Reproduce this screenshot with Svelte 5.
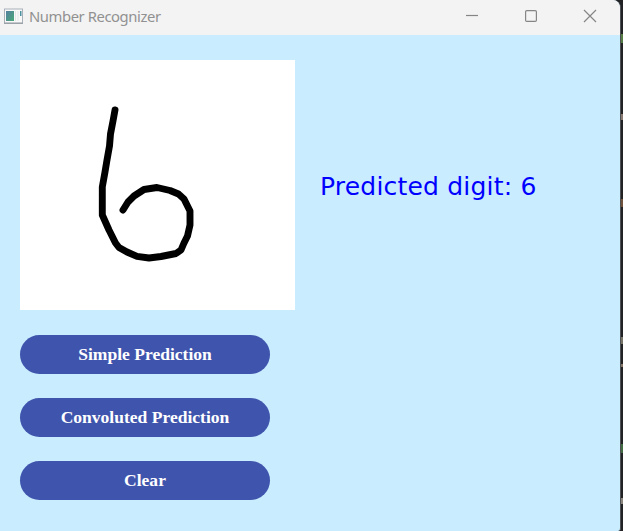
<script>
  const strokePoints =
    '115,110 113,121 110.5,134 109.5,146 107,160 105,172 102.3,187 102.3,215 109,230 115.5,243 119,247.5 127,252 137,256.3 149,258 161,256.5 176,253.5 181,250 184,243 187.5,236 190,225 190,211 184,199 178.5,194 170,190.5 157,187.5 144,189.5 134,196 128,202 123,210';
  const actions = ['Simple Prediction', 'Convoluted Prediction', 'Clear'];
  const fragments = [
    { top: 34, height: 9, color: '#547c43' },
    { top: 114, height: 6, color: '#8a7a70' },
    { top: 199, height: 8, color: '#70523c' },
    { top: 337, height: 7, color: '#777568' },
    { top: 364, height: 3, color: '#887766' },
    { top: 444, height: 9, color: '#426b43' },
    { top: 498, height: 6, color: '#8b8680' }
  ];
</script>

<div class="desktop">
  {#each fragments as f}
    <span class="fragment" style="top: {f.top}px; height: {f.height}px; background: {f.color}"></span>
  {/each}
  <main class="window">
    <header>
      <svg class="app-icon" width="20" height="17" viewBox="0 0 20 17">
        <defs>
          <linearGradient id="screen" x1="0" y1="0" x2="1" y2="1">
            <stop offset="0" stop-color="#5680a0" />
            <stop offset="1" stop-color="#47a878" />
          </linearGradient>
        </defs>
        <rect x="0.5" y="1" width="18" height="14" fill="#f8f8f8" stroke="#aab0b8" />
        <path d="M0 15.3h19" stroke="#8f969d" />
        <rect x="2" y="3" width="8" height="10" fill="url(#screen)" />
        <path d="M11.5 3v10M14 3v10" stroke="#e3e6e9" />
        <rect x="16" y="3" width="1.5" height="5" fill="#4b91a0" />
      </svg>
      <span class="title">Number Recognizer</span>
      <div class="controls">
        <svg width="12" height="12" viewBox="0 0 12 12"><path d="M0 5.5h12" /></svg>
        <svg width="12" height="12" viewBox="0 0 12 12"><rect x="0.6" y="0.6" width="10.8" height="10.8" rx="1.2" /></svg>
        <svg width="12" height="12" viewBox="0 0 12 12"><path d="M0 0L12 12M12 0L0 12" /></svg>
      </div>
    </header>
    <section class="workspace">
      <div class="left">
        <svg class="pad" width="275" height="250" viewBox="20 60 275 250">
          <polyline points={strokePoints} />
        </svg>
        {#each actions as action}
          <button>{action}</button>
        {/each}
      </div>
      <p class="result">Predicted digit: <span>6</span></p>
    </section>
  </main>
</div>

<style>
  :global(body) { margin: 0; overflow: hidden; }
  .desktop { position: relative; width: 623px; height: 531px; background: #222224; overflow: hidden; }
  .window {
    box-sizing: border-box;
    width: 621px;
    height: 531px;
    border-right: 1px solid #4c5256;
    border-radius: 0 8px 3px 0;
    overflow: hidden;
    background: #c9edff;
  }
  .fragment { position: absolute; right: 0; width: 2px; }
  header { display: flex; align-items: center; height: 35px; background: #f3f3f3; }
  .app-icon { margin: -3px 0 0 4px; flex: none; }
  .title {
    margin: -4px 0 0 5px;
    color: #919191;
    font: 14.8px/20px "Noto Sans", sans-serif;
    white-space: nowrap;
    letter-spacing: -0.42px;
  }
  .controls { display: flex; gap: 47px; margin: -3px 24px 0 auto; }
  .controls svg { display: block; fill: none; stroke: #858585; stroke-width: 1.2; overflow: visible; }
  .workspace { display: flex; align-items: flex-start; padding: 25px 0 0 20px; }
  .left { display: flex; flex-direction: column; width: 275px; }
  .pad { display: block; margin-bottom: 25px; background: #fff; }
  .pad polyline { fill: none; stroke: #000; stroke-width: 6.9; stroke-linecap: round; stroke-linejoin: round; }
  button {
    width: 250px;
    height: 39.4px;
    margin: 0 0 23.6px;
    padding: 0;
    border: 0;
    border-radius: 20px;
    background: #3f54ac;
    color: #fff;
    font: bold 17.55px/39px "Liberation Serif", serif;
  }
  .result {
    margin: 112px 0 0 25px;
    color: #00f;
    font: 25px/30px "DejaVu Sans", sans-serif;
    white-space: nowrap;
    letter-spacing: 0.2px;
  }
</style>
